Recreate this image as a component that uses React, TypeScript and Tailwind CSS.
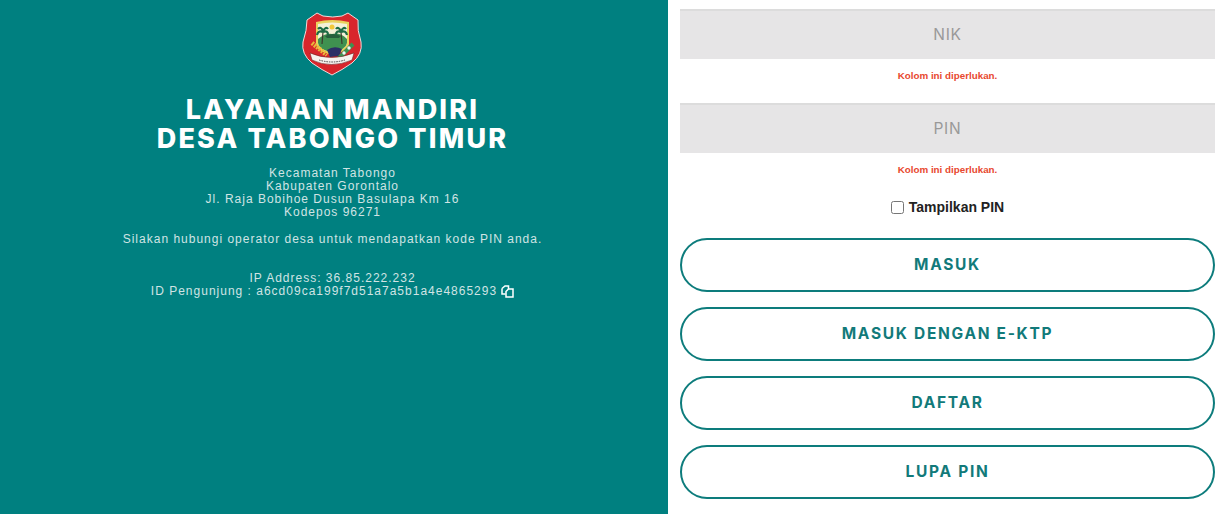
import { useState } from "react";

function Logo() {
  return (
    <svg width="62" height="64" viewBox="0 0 62 64" className="block">
      <path d="M5 8 L15 1 L21 4 Q31 6 40 4 L46 1 L56 8 Q55 18 59 30 Q61 42 50 51 Q40 58 30 63 Q20 58 10 51 Q-1 42 1 30 Q5 18 5 8 Z" fill="#d8262c" stroke="#f3d9d9" strokeWidth="1" />
      <path d="M14 10 Q30 6 47 10 L47 32 Q46 40 30 42 Q15 40 14 32 Z" fill="#e9d35e" />
      <path d="M16 12 Q30 9 45 12 L45 31 Q44 38 30 40 Q17 38 16 31 Z" fill="#f4f1d8" />
      <path d="M16 27 Q23 21 30 22 Q38 20 45 27 L45 31 Q44 38 30 40 Q17 38 16 31 Z" fill="#3f9150" />
      <path d="M23 24 Q31 20 39 24 L37 26 L25 26 Z" fill="#255f3c" />
      <circle cx="30" cy="15" r="2.5" fill="#f2c83a" />
      <path d="M20 32 L21 20 M40 32 L39 20" stroke="#3b3a2c" strokeWidth="1.2" />
      <path d="M21 20 Q16 18 15 23 M21 20 Q26 18 26 23 M21 19 Q19 14 16 17 M21 19 Q24 14 26 17" stroke="#1d6b45" strokeWidth="2.2" fill="none" />
      <path d="M39 20 Q34 18 34 23 M39 20 Q44 18 45 23 M39 19 Q36 14 34 17 M39 19 Q42 14 44 17" stroke="#1d6b45" strokeWidth="2.2" fill="none" />
      <path d="M25 38 Q32 33 40 37 L37 44 L28 45 Z" fill="#2b2f66" />
      <path d="M10 31 L25 43" stroke="#e9b93a" strokeWidth="4.5" strokeDasharray="2 1" />
      <path d="M51 32 L36 47" stroke="#3f9150" strokeWidth="4" />
      <circle cx="47" cy="36" r="1.7" fill="#f5f5f5" />
      <circle cx="42" cy="41" r="1.7" fill="#f5f5f5" />
      <path d="M8 41 Q29 50 52 41 L50 48 Q29 57 10 48 Z" fill="#f7f2ee" stroke="#5b1a1a" strokeWidth="0.5" />
      <path d="M17 48 Q30 52 43 48" stroke="#444" strokeWidth="1" strokeDasharray="1.5 1" fill="none" />
    </svg>
  );
}

function CopyIcon() {
  return (
    <svg width="13" height="13" viewBox="0 0 13 13" className="inline-block ml-[4px] h-[13px] align-top" fill="none" stroke="#ffffff" strokeWidth="1.5">
      <path d="M1 3.5 L4 1 H7.5 V4 M1 3.5 V9 H4.5" />
      <path d="M5 6.5 L7.5 4 H12 V12 H5 Z" />
    </svg>
  );
}

const INPUT =
  "w-full h-[50px] pb-[2px] bg-[#e6e5e6] border-t-2 border-[#dcdcdc] text-center text-[15.5px] tracking-[0.8px] text-[#666] placeholder:text-[#999] outline-none font-['Inter',sans-serif]";
const ERROR = "text-center text-[9.8px] leading-[12px] font-bold text-[#e8492f] font-['Liberation_Sans',sans-serif]";
const BUTTON =
  "w-full h-[54px] rounded-[27px] border-2 border-[#0d7c7c] bg-white text-[15.5px] font-bold tracking-[1.7px] text-[#127a7a] font-['Inter',sans-serif]";

export default function App() {
  const [showPin, setShowPin] = useState(false);

  return (
    <div className="flex h-[514px] w-[1224px] overflow-hidden bg-white">
      <div className="flex w-[668px] flex-col items-center bg-[#008080] pt-3 pr-[3px] text-[#d0e4e4] font-['Liberation_Sans',sans-serif] text-[12px] leading-[13px] tracking-[1px]">
        <Logo />
        <h1 className="mt-[19px] text-center text-[27px] leading-[29px] font-extrabold tracking-[2.2px] text-white font-['Inter',sans-serif]">
          LAYANAN MANDIRI
          <br />
          DESA TABONGO TIMUR
        </h1>
        <div className="mt-[14px] text-center">
          <p>Kecamatan Tabongo</p>
          <p>Kabupaten Gorontalo</p>
          <p>Jl. Raja Bobihoe Dusun Basulapa Km 16</p>
          <p>Kodepos 96271</p>
        </div>
        <p className="mt-[14px] text-center">Silakan hubungi operator desa untuk mendapatkan kode PIN anda.</p>
        <div className="mt-[26px] text-center">
          <p>IP Address: 36.85.222.232</p>
          <p className="h-[13px]">
            ID Pengunjung : a6cd09ca199f7d51a7a5b1a4e4865293
            <CopyIcon />
          </p>
        </div>
      </div>

      <div className="flex w-[535px] ml-3 flex-col pt-[9px]">
        <input className={INPUT} placeholder="NIK" />
        <p className={`mt-[11px] ${ERROR}`}>Kolom ini diperlukan.</p>
        <input className={`mt-[21px] ${INPUT}`} placeholder="PIN" type={showPin ? "text" : "password"} />
        <p className={`mt-[11px] ${ERROR}`}>Kolom ini diperlukan.</p>
        <label className="mt-[23px] flex items-center justify-center gap-[5px] text-[14px] leading-[16px] font-bold text-[#222] font-['Liberation_Sans',sans-serif]">
          <input
            type="checkbox"
            className="h-[13px] w-[13px]"
            checked={showPin}
            onChange={(e) => setShowPin(e.target.checked)}
          />
          Tampilkan PIN
        </label>
        <div className="mt-[23px] flex flex-col gap-[15px]">
          <button className={BUTTON}>MASUK</button>
          <button className={BUTTON}>MASUK DENGAN E-KTP</button>
          <button className={BUTTON}>DAFTAR</button>
          <button className={BUTTON}>LUPA PIN</button>
        </div>
      </div>
    </div>
  );
}
